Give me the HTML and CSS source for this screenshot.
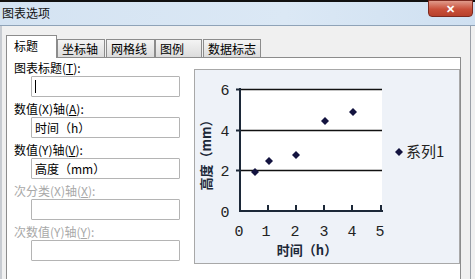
FILE: index.html
```html
<!DOCTYPE html>
<html lang="zh-CN">
<head>
<meta charset="utf-8">
<title>图表选项</title>
<link rel="stylesheet" href="styles.css">
</head>
<body>
<div class="window">
  <div class="titlebar">
    <span class="title">图表选项</span>
    <span class="close">✕</span>
  </div>
  <div class="body">
    <div class="tabs">
      <div class="tab active">标题</div>
      <div class="tab t2">坐标轴</div>
      <div class="tab t3">网格线</div>
      <div class="tab t4">图例</div>
      <div class="tab t5">数据标志</div>
    </div>
    <div class="panel">
      <div class="form">
        <div class="label">图表标题(<u>T</u>):</div>
        <div class="input"><span class="caret"></span></div>
        <div class="label">数值(X)轴(<u>A</u>):</div>
        <div class="input">时间（h）</div>
        <div class="label">数值(Y)轴(<u>V</u>):</div>
        <div class="input">高度（mm）</div>
        <div class="label disabled">次分类(X)轴(<u>X</u>):</div>
        <div class="input"></div>
        <div class="label disabled">次数值(Y)轴(<u>Y</u>):</div>
        <div class="input"></div>
      </div>
      <div class="chart">
        <svg width="264" height="193" viewBox="0 0 264 193">
          <rect x="45" y="19" width="142" height="122" fill="#ffffff"/>
          <g stroke="#111111" stroke-width="1.3">
            <line x1="45" y1="19.5" x2="187" y2="19.5"/>
            <line x1="45" y1="60.5" x2="187" y2="60.5"/>
            <line x1="45" y1="100.5" x2="187" y2="100.5"/>
          </g>
          <g stroke="#1c2838" stroke-width="2">
            <line x1="45" y1="18" x2="45" y2="142"/>
            <line x1="44" y1="141" x2="188" y2="141"/>
            <line x1="41" y1="19.5" x2="45" y2="19.5"/>
            <line x1="41" y1="60.5" x2="45" y2="60.5"/>
            <line x1="41" y1="100.5" x2="45" y2="100.5"/>
            <line x1="73" y1="135" x2="73" y2="141"/>
            <line x1="101" y1="135" x2="101" y2="141"/>
            <line x1="129" y1="135" x2="129" y2="141"/>
            <line x1="157" y1="135" x2="157" y2="141"/>
            <line x1="186" y1="135" x2="186" y2="141"/>
          </g>
          <g class="num" text-anchor="middle">
            <text x="30" y="25">6</text>
            <text x="30" y="66">4</text>
            <text x="30" y="106">2</text>
            <text x="30" y="147">0</text>
            <text x="44" y="166">0</text>
            <text x="71" y="166">1</text>
            <text x="100" y="166">2</text>
            <text x="129" y="166">3</text>
            <text x="157" y="166">4</text>
            <text x="185" y="166">5</text>
          </g>
          <g fill="#13133f">
            <polygon points="60,98 64,102 60,106 56,102"/>
            <polygon points="74,87 78,91 74,95 70,91"/>
            <polygon points="101,81 105,85 101,89 97,85"/>
            <polygon points="130,47 134,51 130,55 126,51"/>
            <polygon points="158,38 162,42 158,46 154,42"/>
            <polygon points="204,78 208,82 204,86 200,82"/>
          </g>
          <text class="axtitle" x="112" y="185" text-anchor="middle">时间（h）</text>
          <text class="axtitle" x="0" y="0" text-anchor="middle" transform="translate(16 82) rotate(-90)">高度（mm）</text>
          <text class="legend" x="211" y="87">系列1</text>
        </svg>
      </div>
    </div>
  </div>
</div>
</body>
</html>
```
FILE: styles.css
```css
html, body {
  margin: 0;
  padding: 0;
}
body {
  width: 475px;
  height: 279px;
  overflow: hidden;
  background: #f0f0f0;
  font-family: "Noto Sans CJK SC", "Noto Sans", sans-serif;
  font-size: 12px;
  color: #000;
}
.window {
  display: flex;
  flex-direction: column;
  height: 279px;
  border-top: 2px solid #111;
  box-sizing: border-box;
}
.titlebar {
  position: relative;
  height: 23px;
  background: linear-gradient(to right, #d4e3f2, #dbe8f5 60%, #cfe0f1);
  border-bottom: 1px solid #8fa3b8;
  display: flex;
  align-items: center;
}
.title {
  margin-left: 2px;
  font-size: 12px;
  line-height: 14px;
  color: #111;
  margin-top: -1px;
}
.close {
  position: absolute;
  right: 2px;
  top: -2px;
  width: 45px;
  height: 17px;
  border-radius: 0 0 4px 4px;
  background: linear-gradient(#e09a8a, #c9503a 55%, #b8412c);
  border: 1px solid #7d2a20;
  box-sizing: border-box;
  color: #fff;
  font-size: 11px;
  font-weight: bold;
  text-align: center;
  line-height: 14px;
}
.body {
  flex: 1;
  display: flex;
  flex-direction: column;
  padding: 8px 9px 0 6px;
  border-left: 2px solid #c8ccd2;
  border-right: 1px solid #9aa0a8;
  margin-right: 4px;
  box-sizing: border-box;
  min-height: 0;
}
.tabs {
  display: flex;
  align-items: flex-end;
  height: 23px;
  position: relative;
  z-index: 1;
}
.tab {
  height: 17px;
  line-height: 17px;
  padding: 0 4px;
  border: 1px solid #8c8c8c;
  border-bottom: none;
  background: linear-gradient(#f4f4f4, #dcdcdc);
  font-size: 12px;
  box-sizing: content-box;
}
.tab.active {
  height: 22px;
  line-height: 20px;
  width: 42px;
  padding: 0 0 0 7px;
  background: #fff;
  margin-bottom: -1px;
  margin-left: -2px;
}
.t2 { width: 38px; }
.t3 { width: 39px; margin-left: 1px; }
.t4 { width: 37px; }
.t5 { width: 48px; margin-left: 1px; }
.panel {
  flex: 1;
  margin-left: -2px;
  background: #fff;
  border: 1px solid #8c8c8c;
  border-bottom: none;
  display: flex;
  align-items: flex-start;
  padding: 2px 0 0 7px;
  min-height: 0;
}
.form {
  display: flex;
  flex-direction: column;
  width: 175px;
}
.label {
  height: 16px;
  line-height: 16px;
  font-size: 12px;
}
.label.disabled {
  color: #a8a8a8;
}
.input {
  margin: 0 0 4px 17px;
  width: 149px;
  height: 21px;
  box-sizing: border-box;
  border: 1px solid #b4b4b4;
  border-radius: 1px;
  font-size: 12px;
  line-height: 19px;
  padding-left: 3px;
  display: flex;
  align-items: center;
}
.caret {
  display: block;
  width: 1px;
  height: 13px;
  background: #000;
}
.chart {
  margin-left: 12px;
  margin-top: 9px;
  width: 264px;
  height: 193px;
  border: 1px solid #a8a8a8;
  background: #eef2f8;
  box-sizing: content-box;
}
.chart svg {
  display: block;
}
.num {
  font-family: "Liberation Mono", monospace;
  font-size: 15px;
  fill: #222;
}
.axtitle {
  font-family: "Noto Sans CJK SC", sans-serif;
  font-size: 13px;
  font-weight: bold;
  fill: #1c2838;
}
.legend {
  font-family: "Noto Sans CJK SC", sans-serif;
  font-size: 15px;
  fill: #222;
}
```
